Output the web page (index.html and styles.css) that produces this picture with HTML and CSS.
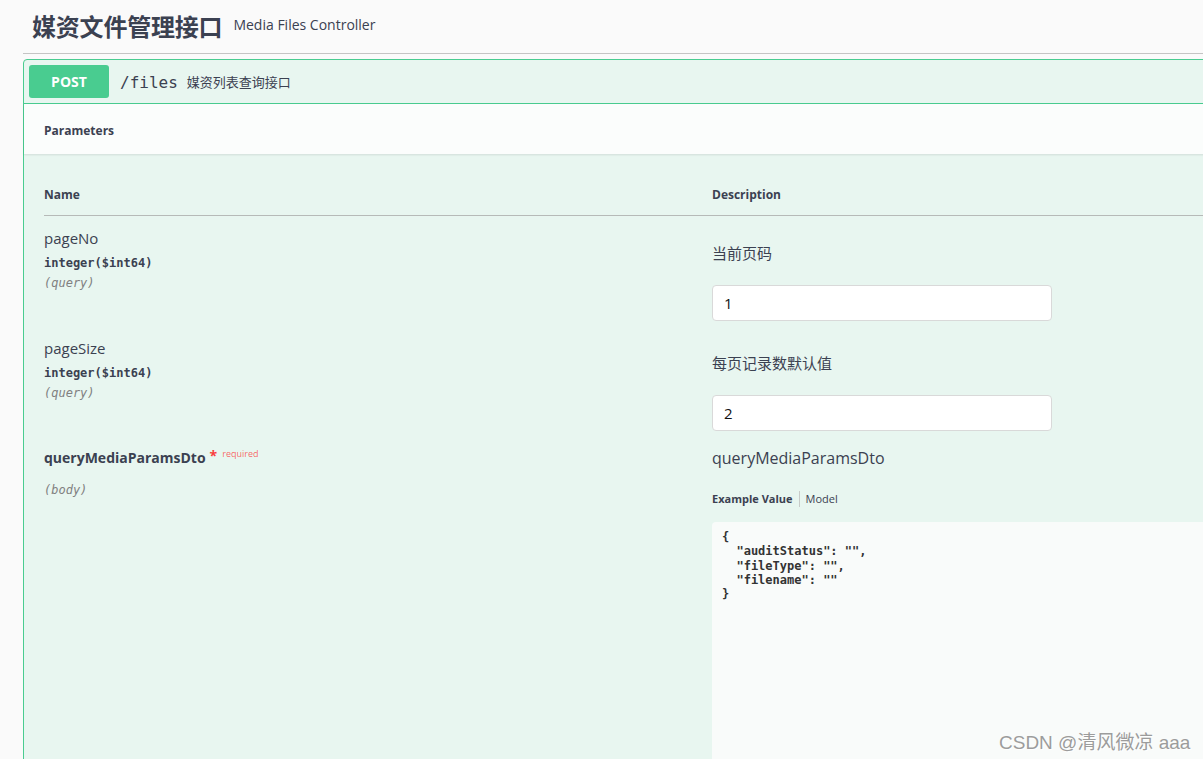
FILE: index.html
```html
<!DOCTYPE html>
<html lang="zh">
<head>
<meta charset="utf-8">
<title>Swagger</title>
<link rel="stylesheet" href="styles.css">
</head>
<body>
<div class="wrap">
  <h3 class="tag">
    <span class="tag-name">媒资文件管理接口</span>
    <small class="tag-desc">Media Files Controller</small>
  </h3>
  <div class="opblock">
    <div class="summary">
      <span class="method">POST</span>
      <span class="path">/files</span>
      <span class="summary-desc">媒资列表查询接口</span>
    </div>
    <div class="section-header">
      <h4 class="section-title">Parameters</h4>
    </div>
    <div class="params">
      <div class="params-head">
        <div class="col-name th">Name</div>
        <div class="col-desc th">Description</div>
      </div>
      <div class="row">
        <div class="col-name">
          <div class="pname">pageNo</div>
          <div class="ptype">integer<span class="fmt">($int64)</span></div>
          <div class="pin">(query)</div>
        </div>
        <div class="col-desc">
          <p class="md">当前页码</p>
          <input class="field" type="text" value="1">
        </div>
      </div>
      <div class="row">
        <div class="col-name">
          <div class="pname">pageSize</div>
          <div class="ptype">integer<span class="fmt">($int64)</span></div>
          <div class="pin">(query)</div>
        </div>
        <div class="col-desc">
          <p class="md">每页记录数默认值</p>
          <input class="field" type="text" value="2">
        </div>
      </div>
      <div class="row">
        <div class="col-name">
          <div class="pname required">queryMediaParamsDto<span class="star">*</span><span class="req">required</span></div>
          <div class="pin pin-body">(body)</div>
        </div>
        <div class="col-desc">
          <div class="body-name">queryMediaParamsDto</div>
          <ul class="tabs">
            <li class="tab active">Example Value</li>
            <li class="tab">Model</li>
          </ul>
          <pre class="code">{
  "auditStatus": "",
  "fileType": "",
  "filename": ""
}</pre>
        </div>
      </div>
    </div>
  </div>
</div>
<div class="watermark">CSDN @清风微凉 aaa</div>
</body>
</html>
```

FILE: styles.css
```css
html, body {
  margin: 0;
  padding: 0;
  height: 100%;
  overflow: hidden;
  background: #fafafa;
  font-family: "Open Sans", "Noto Sans CJK SC", sans-serif;
  color: #3b4151;
}

.wrap {
  padding-left: 23px;
  width: 1300px;
}

.tag {
  margin: 0;
  height: 54px;
  box-sizing: border-box;
  display: flex;
  align-items: center;
  padding: 0 0 2px 9px;
  border-bottom: 1px solid #c4c4c4;
}

.tag-name {
  font-family: "Noto Sans CJK SC", sans-serif;
  font-size: 24px;
  font-weight: 700;
  letter-spacing: -0.2px;
  color: #3b4151;
}

.tag-desc {
  font-size: 14px;
  font-weight: 400;
  margin-left: 11px;
  margin-top: -2px;
  color: #3b4151;
}

.opblock {
  margin-top: 5px;
  border: 1px solid #49cc90;
  border-radius: 4px;
  background: #e8f6f0;
  min-height: 800px;
}

.summary {
  display: flex;
  align-items: center;
  padding: 5px 5px;
  border-bottom: 1px solid #49cc90;
}

.method {
  width: 80px;
  height: 33px;
  line-height: 33px;
  text-align: center;
  background: #49cc90;
  color: #fff;
  font-weight: 700;
  font-size: 14px;
  border-radius: 3px;
}

.path {
  font-family: "DejaVu Sans Mono", monospace;
  font-size: 16px;
  margin-left: 11px;
  margin-top: 2px;
  color: #3b4151;
}

.summary-desc {
  font-family: "Noto Sans CJK SC", sans-serif;
  font-size: 13px;
  margin-left: 9px;
  color: #3b4151;
}

.section-header {
  height: 50px;
  display: flex;
  align-items: center;
  padding: 0 20px;
  background: rgba(255, 255, 255, 0.8);
  box-shadow: 0 1px 2px rgba(0, 0, 0, 0.1);
}

.section-title {
  margin: 0;
  font-size: 12px;
  font-weight: 700;
  padding-top: 2px;
}

.params {
  padding: 20px 0 0 20px;
}

.params-head {
  display: flex;
  border-bottom: 1px solid #b6bab8;
}

.th {
  font-size: 12px;
  font-weight: 700;
  line-height: 16px;
  padding: 13px 0 12px;
}

.col-name {
  width: 668px;
  flex: none;
}

.col-desc {
  flex: 1;
}

.row {
  display: flex;
  padding: 12px 0 5px;
}

.pname {
  font-size: 15px;
  line-height: 20px;
}

.pname.required {
  font-weight: 700;
  font-size: 14px;
}

.star {
  color: #f93e3e;
  font-size: 14px;
  margin-left: 4px;
  position: relative;
  top: -2px;
}

.req {
  font-size: 9px;
  font-weight: 400;
  color: rgba(255, 0, 0, 0.6);
  margin-left: 5px;
  position: relative;
  top: -6px;
}

.ptype {
  font-family: "DejaVu Sans Mono", monospace;
  font-size: 12px;
  font-weight: 700;
  line-height: 20px;
  padding-top: 5px;
}

.fmt {
  font-weight: 700;
}

.pin {
  font-family: "DejaVu Sans Mono", monospace;
  font-size: 12px;
  font-style: italic;
  line-height: 20px;
  color: #808080;
}

.pin-body {
  margin-top: 10px;
}

.md {
  margin: 15px 0 22px;
  font-size: 15px;
  line-height: 20px;
}

.field {
  display: block;
  box-sizing: border-box;
  width: 340px;
  height: 36px;
  margin: 0;
  padding: 0 11px;
  border: 1px solid #d9d9d9;
  border-radius: 4px;
  background: #fff;
  font-family: "Open Sans", sans-serif;
  font-size: 15px;
  color: #111;
  outline: none;
}

.body-name {
  font-size: 16px;
  line-height: 20px;
}

.tabs {
  list-style: none;
  margin: 22px 0 0;
  padding: 0;
  display: flex;
  align-items: center;
  height: 17px;
}

.tab {
  font-size: 11px;
  line-height: 16px;
  color: #3b4151;
}

.tab.active {
  font-weight: 700;
  padding-right: 6px;
  border-right: 1px solid #c8cbc9;
}

.tab + .tab {
  padding-left: 6px;
}

.code {
  margin: 15px 0 0;
  padding: 8px 10px;
  min-height: 300px;
  background: #f9fbfa;
  border-radius: 4px;
  font-family: "DejaVu Sans Mono", monospace;
  font-size: 12px;
  font-weight: 700;
  line-height: 14.3px;
  color: #333;
}

.watermark {
  position: absolute;
  left: 999px;
  top: 727px;
  font-family: "Liberation Sans", "Noto Sans CJK SC", sans-serif;
  font-size: 19px;
  color: #9c9c9c;
  text-shadow: 1px 1px 1px #fff;
  white-space: nowrap;
}
```
